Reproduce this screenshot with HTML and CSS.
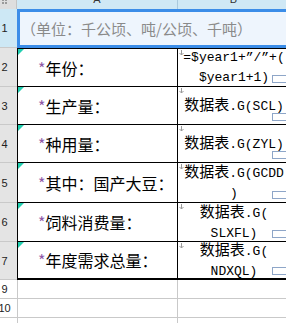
FILE: index.html
```html
<!DOCTYPE html>
<html lang="zh-CN">
<head>
    <meta charset="UTF-8">
    <meta name="viewport" content="width=device-width, initial-scale=1.0">
    <title>需求表</title>
    <link rel="stylesheet" href="styles.css">
</head>
<body>

    <div class="sheet">
        <!-- Column headers -->
        <div class="corner">
            <svg width="9" height="5" viewBox="0 0 9 5"><rect x="2" y="0" width="2" height="1" fill="#9a9a9a"/><rect x="5" y="0" width="2" height="1" fill="#9a9a9a"/><rect x="2" y="2" width="2" height="2" fill="#9a9a9a"/><rect x="5" y="2" width="2" height="2" fill="#9a9a9a"/></svg>
        </div>
        <div class="col-head"><span>A</span></div>
        <div class="col-head"><span>B</span></div>

        <!-- Row 1: units -->
        <div class="row-head sel">1</div>
        <div class="title">（单位：千公顷、吨/公顷、千吨）</div>

        <!-- Rows 2-7 -->
        <div class="row-head">2</div>
        <div class="label first"><span class="star">*</span>年份：</div>
        <div class="formula first">
            <svg class="mark" width="5" height="6" viewBox="0 0 5 6"><path d="M2.5 0V5M0.5 3L2.5 5L4.5 3" stroke="#9a9a9a" fill="none"/></svg>
            <span>=$year1+”/”+(<br>$year1+1)</span>
        </div>

        <div class="row-head">3</div>
        <div class="label"><span class="star">*</span>生产量：</div>
        <div class="formula">
            <svg class="mark" width="5" height="6" viewBox="0 0 5 6"><path d="M2.5 0V5M0.5 3L2.5 5L4.5 3" stroke="#9a9a9a" fill="none"/></svg>
            <span><span class="cn">数据表</span>.G(SCL)</span>
        </div>

        <div class="row-head">4</div>
        <div class="label"><span class="star">*</span>种用量：</div>
        <div class="formula">
            <svg class="mark" width="5" height="6" viewBox="0 0 5 6"><path d="M2.5 0V5M0.5 3L2.5 5L4.5 3" stroke="#9a9a9a" fill="none"/></svg>
            <span><span class="cn">数据表</span>.G(ZYL)</span>
        </div>

        <div class="row-head">5</div>
        <div class="label"><span class="star">*</span>其中：国产大豆：</div>
        <div class="formula">
            <svg class="mark" width="5" height="6" viewBox="0 0 5 6"><path d="M2.5 0V5M0.5 3L2.5 5L4.5 3" stroke="#9a9a9a" fill="none"/></svg>
            <span><span class="cn">数据表</span>.G(GCDD<br>)</span>
        </div>

        <div class="row-head">6</div>
        <div class="label"><span class="star">*</span>饲料消费量：</div>
        <div class="formula">
            <svg class="mark" width="5" height="6" viewBox="0 0 5 6"><path d="M2.5 0V5M0.5 3L2.5 5L4.5 3" stroke="#9a9a9a" fill="none"/></svg>
            <span><span class="cn">数据表</span>.G(<br>SLXFL)</span>
        </div>

        <div class="row-head">7</div>
        <div class="label last"><span class="star">*</span>年度需求总量：</div>
        <div class="formula last">
            <svg class="mark" width="5" height="6" viewBox="0 0 5 6"><path d="M2.5 0V5M0.5 3L2.5 5L4.5 3" stroke="#9a9a9a" fill="none"/></svg>
            <span><span class="cn">数据表</span>.G(<br>NDXQL)</span>
        </div>

        <!-- Empty rows -->
        <div class="row-head blank">9</div>
        <div class="cell a"></div>
        <div class="cell"></div>

        <div class="row-head blank">10</div>
        <div class="cell a"></div>
        <div class="cell"></div>

        <div class="row-head blank">11</div>
        <div class="cell a"></div>
        <div class="cell"></div>
    </div>

</body>
</html>
```

FILE: styles.css
```css
* {
    margin: 0;
    padding: 0;
    box-sizing: border-box;
}

body {
    background-color: #fff;
    color: #000;
    font-family: "Noto Sans CJK SC", sans-serif;
    overflow: hidden;
}

.sheet {
    display: grid;
    grid-template-columns: 17px 161px 112px;
    grid-template-rows: 9px 39px 39px 38px 38px 40px 39px 38px 19px 19px 19px;
    width: 290px;
}

/* Headers */
.corner {
    background-color: #dedede;
    border-right: 1px solid #c4c4c4;
    display: flex;
    align-items: flex-start;
}

.col-head {
    background-color: #cfe8f5;
    border-right: 1px solid #a9c9dd;
    overflow: hidden;
    text-align: center;
    font: 11px/14px "Liberation Sans", sans-serif;
    color: #333;
}

.col-head span {
    display: block;
    margin-top: -8px;
}

.row-head {
    background-color: #e4e4e4;
    border-bottom: 1px solid #c9c9c9;
    font: 11px "Liberation Sans", sans-serif;
    color: #222;
    display: flex;
    align-items: center;
    justify-content: center;
    padding-right: 8px;
}

.row-head.sel {
    background-color: #cde8f5;
}

.row-head.blank {
    background-color: #fff;
}

/* Row 1 */
.title {
    grid-column: span 2;
    background-color: #eef5fd;
    border: 3px solid #3b8de8;
    color: #8a8a8a;
    font-size: 15px;
    display: flex;
    align-items: center;
    padding-left: 1px;
    white-space: nowrap;
    overflow: hidden;
}

/* Column A */
.label {
    position: relative;
    border-left: 1px solid #000;
    border-right: 1px solid #000;
    border-bottom: 1px solid #000;
    padding-left: 20px;
    display: flex;
    align-items: center;
    font-size: 16px;
    white-space: nowrap;
}

.label::before {
    content: "";
    position: absolute;
    top: 0;
    left: 0;
    border-top: 6px solid #20cfb0;
    border-right: 6px solid transparent;
}

.star {
    color: #8e5aa8;
}

/* Column B */
.formula {
    position: relative;
    border-bottom: 1px solid #000;
    display: flex;
    align-items: center;
    justify-content: center;
    text-align: center;
    font: 13px/20px "Liberation Mono", "Noto Sans CJK SC", monospace;
    white-space: nowrap;
}

.formula .cn {
    font-family: "Noto Sans CJK SC", sans-serif;
    font-size: 15px;
}

.formula::after {
    content: "";
    position: absolute;
    left: 94px;
    bottom: 3px;
    width: 22px;
    height: 6px;
    border: 1px solid #8ea6c8;
    background-color: #fff;
}

.mark {
    position: absolute;
    top: 1px;
    left: 1px;
}

.first {
    border-top: 1px solid #000;
}

.last {
    border-bottom-width: 2px;
}

/* Empty rows */
.cell {
    border-bottom: 1px solid #c9c9c9;
    border-right: 1px solid #c9c9c9;
}

.cell.a {
    border-left: 1px solid #c9c9c9;
}
```
